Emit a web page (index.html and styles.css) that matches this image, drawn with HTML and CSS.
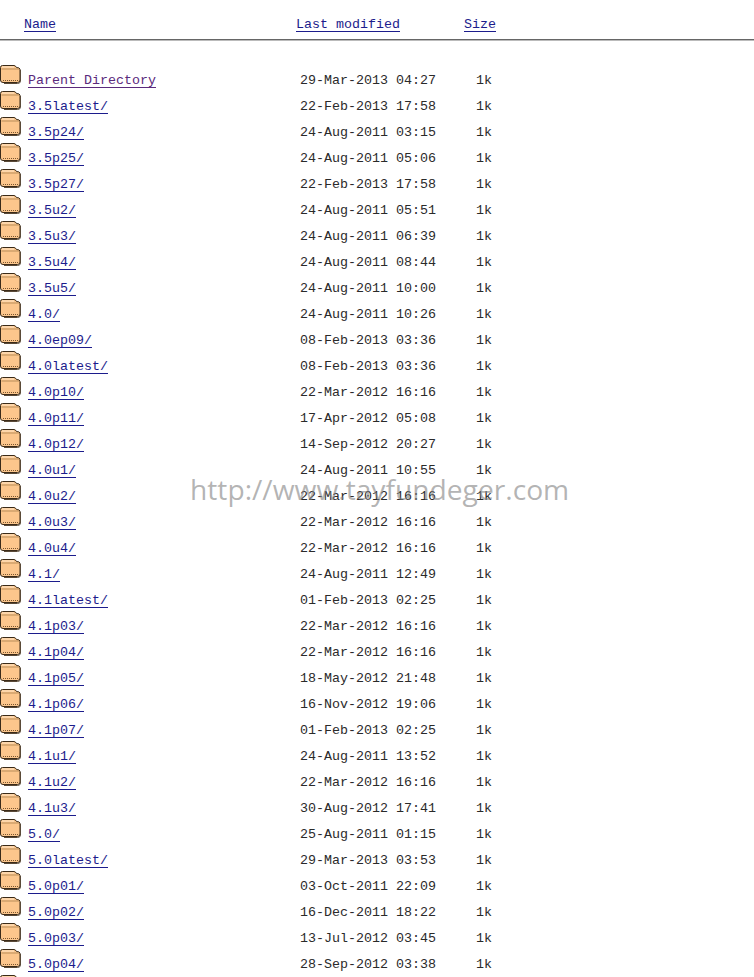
FILE: index.html
```html
<!DOCTYPE html>
<html lang="en">
<head>
<meta charset="utf-8">
<title>Index</title>
<link rel="stylesheet" href="styles.css">
</head>
<body>
<svg class="defs" width="0" height="0" aria-hidden="true">
  <symbol id="folder" viewBox="0 0 21 19">
    <path d="M.5 15V2.5Q.5 .5 2.5 .5H14Q15.5 .5 16.5 2.5Q19.5 2.5 20 4V15Q20 17.5 17.5 17.5H3Q.5 17.5 .5 15Z" fill="#fcc68c" stroke="#3a2a18" stroke-width="1"/>
    <path d="M2 2H14" stroke="#ffe6c8" stroke-width="1" fill="none"/>
    <path d="M1.5 4H19" stroke="#a8804e" stroke-width=".8" fill="none"/>
    <path d="M3 15.5H19" stroke="#7a5630" stroke-width="1.2" stroke-dasharray="1 1" fill="none"/>
    <path d="M20.5 5V16Q20.5 18.5 17.5 18.5H4" stroke="#5a4a38" stroke-width="1" fill="none"/>
  </symbol>
</svg>
<header class="head">
  <a href="#n">Name</a>
  <a href="#m">Last modified</a>
  <a href="#s">Size</a>
</header>
<hr class="rule">
<main class="list">
  <div class="row"><svg class="ico"><use href="#folder"/></svg><a class="seen" href="#p">Parent Directory</a><span>29-Mar-2013 04:27</span><span>1k</span></div>
  <div class="row"><svg class="ico"><use href="#folder"/></svg><a href="#a">3.5latest/</a><span>22-Feb-2013 17:58</span><span>1k</span></div>
  <div class="row"><svg class="ico"><use href="#folder"/></svg><a href="#a">3.5p24/</a><span>24-Aug-2011 03:15</span><span>1k</span></div>
  <div class="row"><svg class="ico"><use href="#folder"/></svg><a href="#a">3.5p25/</a><span>24-Aug-2011 05:06</span><span>1k</span></div>
  <div class="row"><svg class="ico"><use href="#folder"/></svg><a href="#a">3.5p27/</a><span>22-Feb-2013 17:58</span><span>1k</span></div>
  <div class="row"><svg class="ico"><use href="#folder"/></svg><a href="#a">3.5u2/</a><span>24-Aug-2011 05:51</span><span>1k</span></div>
  <div class="row"><svg class="ico"><use href="#folder"/></svg><a href="#a">3.5u3/</a><span>24-Aug-2011 06:39</span><span>1k</span></div>
  <div class="row"><svg class="ico"><use href="#folder"/></svg><a href="#a">3.5u4/</a><span>24-Aug-2011 08:44</span><span>1k</span></div>
  <div class="row"><svg class="ico"><use href="#folder"/></svg><a href="#a">3.5u5/</a><span>24-Aug-2011 10:00</span><span>1k</span></div>
  <div class="row"><svg class="ico"><use href="#folder"/></svg><a href="#a">4.0/</a><span>24-Aug-2011 10:26</span><span>1k</span></div>
  <div class="row"><svg class="ico"><use href="#folder"/></svg><a href="#a">4.0ep09/</a><span>08-Feb-2013 03:36</span><span>1k</span></div>
  <div class="row"><svg class="ico"><use href="#folder"/></svg><a href="#a">4.0latest/</a><span>08-Feb-2013 03:36</span><span>1k</span></div>
  <div class="row"><svg class="ico"><use href="#folder"/></svg><a href="#a">4.0p10/</a><span>22-Mar-2012 16:16</span><span>1k</span></div>
  <div class="row"><svg class="ico"><use href="#folder"/></svg><a href="#a">4.0p11/</a><span>17-Apr-2012 05:08</span><span>1k</span></div>
  <div class="row"><svg class="ico"><use href="#folder"/></svg><a href="#a">4.0p12/</a><span>14-Sep-2012 20:27</span><span>1k</span></div>
  <div class="row"><svg class="ico"><use href="#folder"/></svg><a href="#a">4.0u1/</a><span>24-Aug-2011 10:55</span><span>1k</span></div>
  <div class="row"><svg class="ico"><use href="#folder"/></svg><a href="#a">4.0u2/</a><span>22-Mar-2012 16:16</span><span>1k</span></div>
  <div class="row"><svg class="ico"><use href="#folder"/></svg><a href="#a">4.0u3/</a><span>22-Mar-2012 16:16</span><span>1k</span></div>
  <div class="row"><svg class="ico"><use href="#folder"/></svg><a href="#a">4.0u4/</a><span>22-Mar-2012 16:16</span><span>1k</span></div>
  <div class="row"><svg class="ico"><use href="#folder"/></svg><a href="#a">4.1/</a><span>24-Aug-2011 12:49</span><span>1k</span></div>
  <div class="row"><svg class="ico"><use href="#folder"/></svg><a href="#a">4.1latest/</a><span>01-Feb-2013 02:25</span><span>1k</span></div>
  <div class="row"><svg class="ico"><use href="#folder"/></svg><a href="#a">4.1p03/</a><span>22-Mar-2012 16:16</span><span>1k</span></div>
  <div class="row"><svg class="ico"><use href="#folder"/></svg><a href="#a">4.1p04/</a><span>22-Mar-2012 16:16</span><span>1k</span></div>
  <div class="row"><svg class="ico"><use href="#folder"/></svg><a href="#a">4.1p05/</a><span>18-May-2012 21:48</span><span>1k</span></div>
  <div class="row"><svg class="ico"><use href="#folder"/></svg><a href="#a">4.1p06/</a><span>16-Nov-2012 19:06</span><span>1k</span></div>
  <div class="row"><svg class="ico"><use href="#folder"/></svg><a href="#a">4.1p07/</a><span>01-Feb-2013 02:25</span><span>1k</span></div>
  <div class="row"><svg class="ico"><use href="#folder"/></svg><a href="#a">4.1u1/</a><span>24-Aug-2011 13:52</span><span>1k</span></div>
  <div class="row"><svg class="ico"><use href="#folder"/></svg><a href="#a">4.1u2/</a><span>22-Mar-2012 16:16</span><span>1k</span></div>
  <div class="row"><svg class="ico"><use href="#folder"/></svg><a href="#a">4.1u3/</a><span>30-Aug-2012 17:41</span><span>1k</span></div>
  <div class="row"><svg class="ico"><use href="#folder"/></svg><a href="#a">5.0/</a><span>25-Aug-2011 01:15</span><span>1k</span></div>
  <div class="row"><svg class="ico"><use href="#folder"/></svg><a href="#a">5.0latest/</a><span>29-Mar-2013 03:53</span><span>1k</span></div>
  <div class="row"><svg class="ico"><use href="#folder"/></svg><a href="#a">5.0p01/</a><span>03-Oct-2011 22:09</span><span>1k</span></div>
  <div class="row"><svg class="ico"><use href="#folder"/></svg><a href="#a">5.0p02/</a><span>16-Dec-2011 18:22</span><span>1k</span></div>
  <div class="row"><svg class="ico"><use href="#folder"/></svg><a href="#a">5.0p03/</a><span>13-Jul-2012 03:45</span><span>1k</span></div>
  <div class="row"><svg class="ico"><use href="#folder"/></svg><a href="#a">5.0p04/</a><span>28-Sep-2012 03:38</span><span>1k</span></div>
  <div class="row"><svg class="ico"><use href="#folder"/></svg></div>
</main>
<div class="mark">http://www.tayfundeger.com</div>
</body>
</html>
```
FILE: styles.css
```css
html, body {
  margin: 0;
  padding: 0;
  background: #fff;
}
html {
  height: 977px;
  overflow: hidden;
}
body {
  position: relative;
  height: 977px;
  overflow: hidden;
  font-family: "Liberation Mono", monospace;
  font-size: 13.33px;
  line-height: 16px;
  color: #2a2a2a;
}
a {
  color: #1c1c8c;
  text-decoration: underline;
  text-underline-offset: 3px;
  text-decoration-thickness: 1px;
}
a.seen {
  color: #5a2a7c;
}
.defs {
  position: absolute;
}
.head {
  display: grid;
  grid-template-columns: 272px 168px auto;
  justify-content: start;
  padding: 17px 0 0 24px;
  height: 22px;
}
.head a {
  justify-self: start;
}
.rule {
  margin: 0;
  height: 2px;
  border: 0;
  background: linear-gradient(#666 0 1px, #bbb 1px);
}
.list {
  display: grid;
  grid-auto-rows: 26px;
  padding-top: 24px;
}
.row {
  display: grid;
  grid-template-columns: 28px 272px 176px auto;
  justify-content: start;
  align-items: start;
}
.row a, .row span {
  justify-self: start;
  margin-top: 8px;
}
.ico {
  width: 21px;
  height: 19px;
}
.mark {
  position: absolute;
  left: 190px;
  top: 469px;
  font-family: "Open Sans", sans-serif;
  font-size: 28.2px;
  line-height: 40px;
  color: rgba(130, 130, 130, 0.6);
  white-space: nowrap;
}
```
